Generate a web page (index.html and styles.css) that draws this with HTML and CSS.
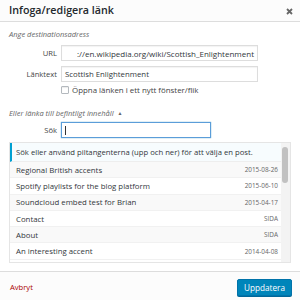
FILE: index.html
```html
<!DOCTYPE html>
<html lang="sv">
<head>
<meta charset="UTF-8">
<title>Infoga/redigera länk</title>
<link rel="stylesheet" href="styles.css">
</head>
<body>
<div class="dialog">
  <div class="head">
    <h1>Infoga/redigera länk</h1>
    <span class="close"><svg width="7" height="7" viewBox="0 0 7 7"><path d="M1 1L6 6M6 1L1 6" stroke="#666" stroke-width="1.8"/></svg></span>
  </div>

  <div class="body">
    <p class="hint">Ange destinationsadress</p>

    <div class="field">
      <label>URL</label>
      <div class="input wide url"><span>://en.wikipedia.org/wiki/Scottish_Enlightenment</span></div>
    </div>
    <div class="field gap">
      <label>Länktext</label>
      <div class="input wide">Scottish Enlightenment</div>
    </div>
    <div class="check"><span class="box"></span>Öppna länken i ett nytt fönster/flik</div>

    <p class="hint toggle">Eller länka till befintligt innehåll <span class="arrow">▲</span></p>

    <div class="field">
      <label>Sök</label>
      <div class="input search"><span class="caret"></span></div>
    </div>

    <div class="results">
      <ul class="list">
        <li class="info">Sök eller använd piltangenterna (upp och ner) för att välja en post.</li>
        <li class="alt"><span>Regional British accents</span><em>2015-08-26</em></li>
        <li><span>Spotify playlists for the blog platform</span><em>2015-06-10</em></li>
        <li class="alt"><span>Soundcloud embed test for Brian</span><em>2015-04-17</em></li>
        <li><span>Contact</span><em>SIDA</em></li>
        <li class="alt"><span>About</span><em>SIDA</em></li>
        <li><span>An interesting accent</span><em>2014-04-08</em></li>
      </ul>
      <div class="scroll"><div class="thumb"></div></div>
    </div>
  </div>

  <div class="foot">
    <a href="#" class="cancel">Avbryt</a>
    <button class="submit">Uppdatera</button>
  </div>
</div>
</body>
</html>
```

FILE: styles.css
```css
*{box-sizing:border-box}
body{
  margin:0;font-family:"Open Sans","Noto Sans",Arial,sans-serif;
  background:#fff;color:#444
}
.dialog{width:300px;height:300px;display:flex;flex-direction:column;background:#fff}
.head{
  height:22px;flex:none;display:flex;align-items:center;justify-content:space-between;
  padding:0 7px 0 9px;background:#fcfcfc;border-bottom:1px solid #ddd
}
.head h1{margin:0;font-size:10.7px;font-weight:600;color:#23282d;line-height:1}
.close{display:flex;margin-top:1px}
.body{flex:1;padding:7px 9px 0}
.hint{margin:0;font-size:7.5px;font-style:italic;color:#666;line-height:10px}
.toggle{margin-top:14px}
.arrow{font-style:normal;font-size:5px;margin-left:2px;vertical-align:1px}
.field{display:flex;align-items:center;margin-top:6px;height:16px}
.field.gap{margin-top:5px}
.field label{width:48px;text-align:right;font-size:7.6px;color:#444;margin-right:4px}
.toggle + .field{margin-top:4px}
.input{
  height:16px;border:1px solid #ddd;box-shadow:inset 0 1px 1px rgba(0,0,0,.05);
  font-size:7.8px;color:#32373c;padding:0 3px;display:flex;align-items:center;
  white-space:nowrap;overflow:hidden
}
.wide{width:197px}
.url{justify-content:flex-end}
.url span{font-size:8px}
.search{width:150px;border-color:#5b9dd9;box-shadow:0 0 1px rgba(30,140,190,.8)}
.caret{width:1px;height:9px;background:#333}
.check{display:flex;align-items:center;margin:4px 0 0 52px;height:8px;font-size:7.9px;color:#444}
.box{width:8px;height:8px;border:1px solid #b4b9be;border-radius:1px;background:#fff;margin-right:3px;box-shadow:inset 0 1px 1px rgba(0,0,0,.08)}
.results{
  margin-top:4px;height:121px;border:1px solid #e5e5e5;display:flex;overflow:hidden;background:#fff
}
.list{list-style:none;margin:0;padding:0;flex:1;overflow:hidden}
.list li{
  height:16.3px;display:flex;align-items:center;justify-content:space-between;
  padding:0 3px 0 6px;border-bottom:1px solid #f1f1f1;font-size:7.8px;color:#32373c
}
.list li.alt{background:#f9f9f9}
.list li.info{
  height:19px;background:#f7fcfe;border-left:2px solid #00a0d2;padding-left:4px;
  border-bottom:1px solid #eee;color:#32373c;font-size:7.7px
}
.list em{font-style:normal;font-size:6.4px;color:#666}
.scroll{width:9px;flex:none;background:#f3f3f3;padding:4px 1px 0 1px}
.thumb{width:6px;height:36px;background:#c1c1c1;border-radius:3px}
.foot{
  height:29px;flex:none;display:flex;align-items:flex-start;justify-content:space-between;
  padding:7px 8px 0 10px;background:#fcfcfc;border-top:1px solid #ddd
}
.cancel{color:#a00;font-size:7.6px;text-decoration:none;margin-top:3px}
.submit{
  height:17px;padding:0 6px;background:#0085ba;border:1px solid #0073aa;border-radius:2px;
  color:#fff;font:400 8.2px "Open Sans",sans-serif;box-shadow:0 1px 0 #006799
}
```
